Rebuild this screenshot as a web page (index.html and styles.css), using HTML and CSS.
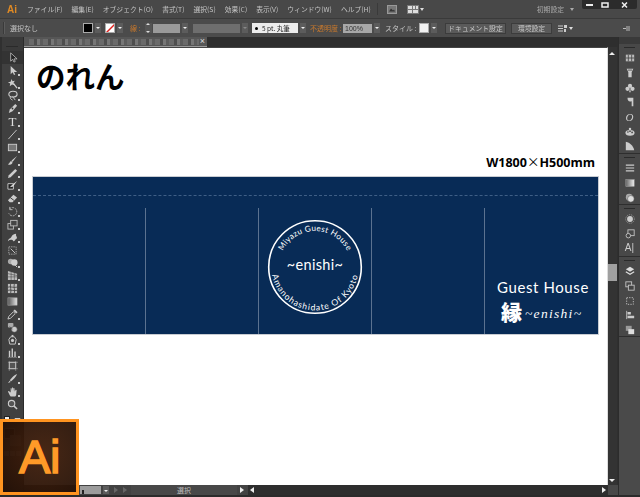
FILE: index.html
```html
<!DOCTYPE html>
<html lang="ja">
<head>
<meta charset="utf-8">
<title>Illustrator のれん</title>
<link rel="stylesheet" href="styles.css">
</head>
<body>
<div class="app">
  <header class="menubar">
    <span class="logo">Ai</span>
    <nav class="menus">
      <span>ファイル(F)</span><span>編集(E)</span><span>オブジェクト(O)</span><span>書式(T)</span><span>選択(S)</span><span>効果(C)</span><span>表示(V)</span><span>ウィンドウ(W)</span><span>ヘルプ(H)</span>
    </nav>
    <span class="menu-sep"></span>
    <svg class="mb-icon" width="10" height="9" viewBox="0 0 10 9"><rect x=".5" y=".5" width="9" height="8" fill="#777" stroke="#999"/><path d="M2 6.5l2-3 2 2 1-1 1 2z" fill="#333"/></svg>
    <svg class="mb-icon2" width="12" height="9" viewBox="0 0 12 9"><rect width="12" height="9" fill="#777"/><path d="M1 1h4v3H1zM6 1h2v3H6zM9 1h2v3H9zM1 5h4v3H1zM6 5h5v3H6z" fill="#ddd"/></svg>
    <span class="caret-s"></span>
    <span class="workspace">初期設定</span>
    <span class="caret-s ws-caret"></span>
    <div class="winbtns">
      <span class="winbtn"><svg width="7" height="5" viewBox="0 0 7 5"><rect y="2" width="7" height="2" fill="#eee"/></svg></span>
      <span class="winbtn"><svg width="8" height="6" viewBox="0 0 8 6"><rect x="1" y="1" width="6" height="4" fill="none" stroke="#eee" stroke-width="1.5"/></svg></span>
      <span class="winbtn close"><svg width="7" height="6" viewBox="0 0 7 6"><path d="M1 .5l5 5M6 .5l-5 5" stroke="#eee" stroke-width="1.5"/></svg></span>
    </div>
  </header>

  <div class="controlbar">
    <span class="grip"></span>
    <span class="c-label sel">選択なし</span>
    <span class="swatch black"></span><span class="dd"></span>
    <span class="swatch none"><svg width="9" height="9" viewBox="0 0 9 9"><path d="M0 9L9 0" stroke="#e0201c" stroke-width="1.4"/></svg></span><span class="dd"></span>
    <span class="c-label orange stroke-l">線 :</span>
    <span class="stepper"></span>
    <span class="field f-stroke"></span><span class="dd"></span>
    <span class="field f-dash"></span><span class="dd dim"></span>
    <span class="brush"><i></i>5 pt. 丸筆</span><span class="dd"></span>
    <span class="c-label orange op-l">不透明度 :</span>
    <span class="field f-op">100%</span><span class="dd"></span>
    <span class="c-label style-l">スタイル :</span>
    <span class="swatch white"></span><span class="dd"></span>
    <span class="btn b-doc">ドキュメント設定</span>
    <span class="btn b-env">環境設定</span>
    <svg class="c-icon" width="10" height="9" viewBox="0 0 10 9"><path d="M0 2h5M0 4.5h5M0 7h5" stroke="#ccc"/><path d="M6 1h3v3H6zM6 5h2v3H6z" fill="#ccc"/></svg>
    <span class="caret-s"></span>
    <svg class="c-end" width="7" height="7" viewBox="0 0 7 7"><path d="M0 3.5h3M4 1v5M6 1v5" stroke="#bbb"/></svg>
  </div>

  <div class="main">
    <aside class="toolbar">
      <div class="pane-head"><i></i></div>
      <div class="tool sel-tool"><svg viewBox="0 0 12 12"><path d="M4 1v9l2.2-2 1.4 3 1.4-.7L7.6 7.5H11z" fill="#222" stroke="#ccc" stroke-width=".8"/></svg></div>
      <div class="tool more"><svg viewBox="0 0 12 12"><path d="M4 1v9l2.2-2 1.4 3 1.4-.7L7.6 7.5H11z" fill="#ccc"/></svg></div>
      <div class="tool more"><svg viewBox="0 0 12 12"><path d="M7 6l4 5" stroke="#ccc" stroke-width="1.4"/><path d="M5 1l1 2.5L8.500 3 7 5.500 8.500 8 5.500 7 3 9l.5-3L1 4.500 4 4z" fill="#ccc"/></svg></div>
      <div class="tool more"><svg viewBox="0 0 12 12"><ellipse cx="6.500" cy="4.500" rx="4.500" ry="3.200" fill="none" stroke="#ccc" stroke-width="1.2"/><path d="M4 7c-1 2 0 3 2 4M6 7l3 4" fill="none" stroke="#ccc"/></svg></div>
      <div class="tool more grp"><svg viewBox="0 0 12 12"><path d="M9 1l2 2-5 6-4 2 1-4z" fill="#ccc"/><circle cx="6" cy="6" r="1" fill="#333"/></svg></div>
      <div class="tool more"><span class="t-glyph">T</span></div>
      <div class="tool more"><svg viewBox="0 0 12 12"><path d="M1.500 11L10.500 1" stroke="#ccc"/></svg></div>
      <div class="tool more"><svg viewBox="0 0 12 12"><rect x="1.500" y="2.500" width="9" height="7" fill="#777" stroke="#ccc"/></svg></div>
      <div class="tool more"><svg viewBox="0 0 12 12"><path d="M11 1L5 6l1 1.500zM4.500 6.500C3 7 3 9 1 10c2 1.500 5 .5 5-2z" fill="#ccc"/></svg></div>
      <div class="tool more"><svg viewBox="0 0 12 12"><path d="M9 1l2 2-7 7-3 1 1-3z" fill="#ccc"/></svg></div>
      <div class="tool more"><svg viewBox="0 0 12 12"><path d="M1 4h6v6H1z" fill="#222" stroke="#ccc"/><path d="M11 1L6 5l1 1.500zM3 8l3-3 1 2z" fill="#ddd"/></svg></div>
      <div class="tool more"><svg viewBox="0 0 12 12"><path d="M7 2l4 3-5 5H3L1 8z" fill="#ccc"/><path d="M3.500 5l4 3" stroke="#333"/></svg></div>
      <div class="tool more grp"><svg viewBox="0 0 12 12"><path d="M3 3a4.500 4.500 0 1 1-1 5" fill="none" stroke="#bbb" stroke-dasharray="2 1"/><path d="M3 1v3h3" fill="none" stroke="#bbb"/></svg></div>
      <div class="tool more"><svg viewBox="0 0 12 12"><rect x="1" y="5" width="6" height="6" fill="none" stroke="#bbb"/><rect x="4" y="1.500" width="7" height="6" fill="#444" stroke="#bbb"/></svg></div>
      <div class="tool more"><svg viewBox="0 0 12 12"><path d="M1 10c1-4 3-2 4-5 1-2 3-3 5-3-1 2 1 3 1 5-2 0-2 3-4 3-1-2-4-2-6 0z" fill="#ccc"/></svg></div>
      <div class="tool"><svg viewBox="0 0 12 12"><path d="M2 2h8v8H2z" fill="none" stroke="#aaa" stroke-dasharray="1.500 1"/><path d="M4 4l5 5" stroke="#ccc"/></svg></div>
      <div class="tool more"><svg viewBox="0 0 12 12"><circle cx="4" cy="5" r="3" fill="#aaa"/><circle cx="8" cy="6" r="3.500" fill="#ccc"/><path d="M9 9l2 2" stroke="#ddd"/></svg></div>
      <div class="tool more"><svg viewBox="0 0 12 12"><path d="M1 1l10 3v7H1z" fill="#bbb"/><path d="M1 4l10 2M1 7.500h10M4.500 2v9M8 3v8" stroke="#444" stroke-width=".6"/></svg></div>
      <div class="tool"><svg viewBox="0 0 12 12"><rect x="1" y="1" width="10" height="10" fill="#bbb"/><path d="M1 4.500c3-1 6 1 10 0M1 8c3-1 6 1 10 0M4 1c-1 3 1 7 0 10M8 1c-1 3 1 7 0 10" stroke="#333" fill="none" stroke-width=".8"/></svg></div>
      <div class="tool"><svg viewBox="0 0 12 12"><defs><linearGradient id="g1"><stop offset="0" stop-color="#555"/><stop offset="1" stop-color="#e4e4e4"/></linearGradient></defs><rect x="1" y="2" width="10" height="8" fill="url(#g1)" stroke="#aaa" stroke-width=".6"/></svg></div>
      <div class="tool more"><svg viewBox="0 0 12 12"><path d="M1 11l1-3 5-5 2 2-5 5z" fill="none" stroke="#ccc"/><path d="M7 2l1.500-1.500 3 3L10 5z" fill="#ccc"/></svg></div>
      <div class="tool"><svg viewBox="0 0 12 12"><rect x="1" y="1" width="6" height="5" rx="1" fill="#aaa"/><circle cx="8" cy="8" r="3.200" fill="#ccc" stroke="#444" stroke-width=".6"/><path d="M3 5l3 3" stroke="#555"/></svg></div>
      <div class="tool more grp"><svg viewBox="0 0 12 12"><path d="M4 3h4l2 3-1 5H3L2 6z" fill="none" stroke="#ccc"/><path d="M5 1h2v2H5z" fill="#ccc"/><circle cx="6" cy="7" r="1.700" fill="#ccc"/></svg></div>
      <div class="tool more"><svg viewBox="0 0 12 12"><path d="M2 4h1.500v7H2zM5 1.500h1.500V11H5zM8 5h1.500v6H8z" fill="#ccc"/><path d="M1 11.300h10" stroke="#aaa" stroke-width=".6"/></svg></div>
      <div class="tool grp"><svg viewBox="0 0 12 12"><rect x="2.500" y="2.500" width="7" height="7" fill="#555" stroke="#ccc"/><path d="M1 2.500h11M1 9.500h11M2.500 1v11M9.500 1v11" stroke="#bbb" stroke-width=".5"/></svg></div>
      <div class="tool more"><svg viewBox="0 0 12 12"><path d="M11 1C8 2 5 5 3 8l1.500 1C7 7 10 4 11 1zM3 8.500L1 11l3-1.200z" fill="#ccc"/></svg></div>
      <div class="tool more grp"><svg viewBox="0 0 12 12"><path d="M3 10L1 6l1-.5L4 7V2.500l1 0 .5 3V1.500h1l.5 4V2.300h1l.5 3.700 1-2 1 .3L10 10l-1 1.500H4z" fill="#ccc"/></svg></div>
      <div class="tool"><svg viewBox="0 0 12 12"><circle cx="5" cy="5" r="3.500" fill="#555" stroke="#ccc" stroke-width="1.200"/><path d="M7.500 7.500L11 11" stroke="#ccc" stroke-width="1.600"/></svg></div>
      <div class="colors">
        <div class="defaults"><span></span><svg width="7" height="7" viewBox="0 0 7 7"><path d="M1 2.500h5M1 5V2.500M6 2.500v3" stroke="#ccc" fill="none"/></svg></div>
        <div class="fillstroke"><i class="fs-fill"></i><i class="fs-stroke"></i></div>
        <div class="modes"><i></i><i></i><i></i></div>
      </div>
    </aside>

    <section class="workspace-area">
      <div class="tabbar">
        <div class="tab"><span class="tab-blur"></span><span class="tab-x">×</span></div>
      </div>
      <div class="doc-row">
        <div class="canvas">
          <h1 class="title">のれん</h1>
          <p class="dim-note">W1800<span class="times">×</span>H500mm</p>
          <div class="noren">
            <div class="hem"></div>
            <div class="panels">
              <div class="panel"></div>
              <div class="panel"></div>
              <div class="panel seal-panel">
                <svg class="seal" width="96" height="96" viewBox="0 0 96 96">
                  <defs>
                    <path id="arcTop" d="M12 48a36 36 0 0 1 72 0"/>
                    <path id="arcBottom" d="M4.500 48a43.500 43.500 0 0 0 87 0"/>
                  </defs>
                  <circle cx="48" cy="48" r="46.300" fill="none" stroke="#fff" stroke-width="1.600"/>
                  <text class="seal-text"><textPath href="#arcTop" startOffset="50%" text-anchor="middle">Miyazu Guest House</textPath></text>
                  <text class="seal-text wide"><textPath href="#arcBottom" startOffset="50%" text-anchor="middle">Amanohashidate Of Kyoto</textPath></text>
                  <text class="seal-name" x="48" y="51" text-anchor="middle">~enishi~</text>
                </svg>
              </div>
              <div class="panel"></div>
              <div class="panel sign-panel">
                <div class="sign-en">Guest House</div>
                <div class="sign-jp"><span class="kanji">縁</span><span class="romaji">~enishi~</span></div>
              </div>
            </div>
          </div>
        </div>
        <div class="vscroll">
          <span class="arrow-up"></span>
          <span class="thumb"></span>
          <span class="arrow-down"></span>
        </div>
      </div>
      <div class="statusbar">
        <span class="zoomfield"><i></i></span><span class="dd"></span>
        <span class="nav"></span><span class="nav bar"></span>
        <span class="status-text">選択</span>
        <span class="arrow-r"></span>
        <div class="hscroll"><span class="arrow-l"></span><span class="arrow-r end"></span></div>
        <span class="corner"></span>
      </div>
    </section>

    <aside class="panels-dock">
      <div class="dock-top"></div>
      <div class="dock-group g1">
        <i class="bar"></i>
        <svg viewBox="0 0 12 12"><rect x="1" y="2" width="10" height="8" fill="#bbb"/><path d="M4 2v8M8 2v8M1 6h10" stroke="#444"/></svg>
        <svg viewBox="0 0 12 12"><path d="M2 1h8l-2 4v6H4V5z" fill="#ccc"/><path d="M3.500 2.500h5" stroke="#444"/></svg>
        <svg viewBox="0 0 12 12"><circle cx="6" cy="3.500" r="2.500" fill="#ccc"/><circle cx="3" cy="7" r="2.500" fill="#ccc"/><circle cx="9" cy="7" r="2.500" fill="#ccc"/><path d="M5 11l1-5 1 5z" fill="#ccc"/></svg>
        <svg viewBox="0 0 12 12"><path d="M3 1h7v10H8V5C5 6 3 5 3 1z" fill="#ccc"/></svg>
        <span class="dock-o">O</span>
        <svg viewBox="0 0 12 12"><ellipse cx="6" cy="7" rx="5.500" ry="3.500" fill="#ccc"/><circle cx="3.500" cy="6" r="1" fill="#444"/><circle cx="6" cy="5" r="1" fill="#444"/><circle cx="8.500" cy="6.500" r="1" fill="#444"/><circle cx="6" cy="2.500" r="1.500" fill="#ccc"/></svg>
        <svg viewBox="0 0 12 12"><path d="M1 1c5 1 9 5 10 10H1z" fill="#ccc"/></svg>
      </div>
      <div class="dock-group g2">
        <i class="bar"></i>
        <svg viewBox="0 0 12 12"><path d="M1 2.500h10M1 6h10M1 9.500h10" stroke="#ccc" stroke-width="1.400"/></svg>
        <svg viewBox="0 0 12 12"><defs><linearGradient id="g2"><stop offset="0" stop-color="#666"/><stop offset="1" stop-color="#eee"/></linearGradient></defs><rect x="1" y="2" width="10" height="8" fill="url(#g2)" stroke="#aaa" stroke-width=".6"/></svg>
        <svg viewBox="0 0 12 12"><circle cx="5" cy="5" r="4" fill="#aaa"/><circle cx="7" cy="7" r="4" fill="#ddd" stroke="#444" stroke-width=".6"/></svg>
      </div>
      <div class="dock-group g3">
        <i class="bar"></i>
        <svg viewBox="0 0 12 12"><circle cx="6" cy="6" r="3.500" fill="#ccc"/><circle cx="6" cy="6" r="5.200" fill="none" stroke="#999" stroke-dasharray="1.500 1"/></svg>
        <svg viewBox="0 0 12 12"><rect x="3.500" y="1" width="7.500" height="7" fill="none" stroke="#ccc"/><circle cx="4" cy="8" r="2.700" fill="#444" stroke="#ccc"/></svg>
        <span class="dock-a">A|</span>
      </div>
      <div class="dock-group g4">
        <i class="bar"></i>
        <svg viewBox="0 0 12 12"><path d="M6 1l5 3-5 3-5-3z" fill="#ddd"/><path d="M1 7l5 3 5-3" fill="none" stroke="#ddd" stroke-width="1.400"/></svg>
        <svg viewBox="0 0 12 12"><rect x="1" y="1" width="7" height="6" fill="none" stroke="#ccc"/><rect x="4" y="5" width="7" height="6" fill="#444" stroke="#ccc"/></svg>
        <svg viewBox="0 0 12 12"><rect x="2" y="2" width="8" height="8" fill="none" stroke="#ccc" stroke-dasharray="1.500 1.500"/></svg>
        <svg viewBox="0 0 12 12"><path d="M2 1v10" stroke="#ccc"/><path d="M3 2.500h4v3H3zM3 7h8v3H3z" fill="#ccc"/></svg>
        <svg viewBox="0 0 12 12"><rect x="1" y="1" width="7" height="6" fill="#999"/><rect x="4" y="5" width="7" height="6" fill="#ddd"/></svg>
      </div>
      <div class="dock-rest"></div>
    </aside>
  </div>
  <div class="app-foot"></div>

  <div class="ai-badge"><span>Ai</span></div>
</div>
</body>
</html>
```

FILE: styles.css
```css
* { box-sizing: border-box; }
html, body { margin: 0; padding: 0; overflow: hidden; }
body {
  width: 640px; height: 497px;
  background: #2f2f2f;
  font-family: "Noto Sans CJK JP", "Liberation Sans", sans-serif;
  color: #c8c8c8;
}
.app { position: relative; width: 640px; height: 497px; display: flex; flex-direction: column; overflow: hidden; }

/* menu bar */
.menubar {
  height: 18px; flex: none; display: flex; align-items: center;
  background: #484848; font-size: 6.800px; line-height: 1; position: relative;
  filter: blur(.3px);
}
.logo { width: 27px; padding-left: 7px; color: #e08a24; font: bold 10px "Liberation Sans", sans-serif; }
.menus { display: flex; gap: 9px; white-space: nowrap; }
.menus span { color: #c4c4c4; }
.menu-sep { width: 1px; height: 12px; background: #3a3a3a; margin-left: 6px; }
.mb-icon { margin-left: 9px; }
.mb-icon2 { margin-left: 10px; }
.caret-s { width: 0; height: 0; border: 2px solid transparent; border-top: 3px solid #ddd; border-bottom: 0; margin-left: 1px; }
.workspace { margin-left: auto; color: #aaa; margin-right: 5px; }
.ws-caret { border-top-color: #aaa; margin-right: 8px; }
.winbtns { display: flex; height: 9px; align-self: flex-start; background: #2b2b2b; margin-right: 3px; border-radius: 0 0 2px 2px; }
.winbtn { width: 15px; display: flex; align-items: center; justify-content: center; }
.winbtn.close { width: 25px; }

/* control bar */
.controlbar {
  height: 19px; flex: none; display: flex; align-items: center;
  background: #4b4b4b; border-top: 1px solid #3a3a3a; font-size: 7px; line-height: 1; white-space: nowrap;
  filter: blur(.3px);
}
.grip { width: 2px; height: 12px; margin-left: 3px; background: #3a3a3a; border-right: 1px solid #5c5c5c; }
.c-label { color: #c2c2c2; }
.sel { margin-left: 5px; width: 73px; }
.orange { color: #c9792c; }
.swatch { width: 10px; height: 10px; border: 1px solid #aaa; display: block; flex: none; }
.swatch.black { background: #000; }
.swatch.none { background: #fff; margin-left: 4px; padding: 0; overflow: hidden; }
.swatch.none svg { display: block; }
.swatch.white { background: #f2f2f2; }
.dd { width: 6px; height: 10px; margin-left: 2px; background: #5c5c5c; flex: none; position: relative; }
.dd::after { content: ""; position: absolute; left: 1px; top: 4px; border: 2px solid transparent; border-top: 2px solid #eee; border-bottom: 0; }
.dd.dim::after { border-top-color: #888; }
.stroke-l { margin-left: 7px; width: 15px; }
.stepper { width: 7px; height: 10px; background: #555; position: relative; }
.stepper::before, .stepper::after { content: ""; position: absolute; left: 1px; border: 2px solid transparent; }
.stepper::before { top: 0; border-bottom: 2px solid #ddd; border-top: 0; }
.stepper::after { bottom: 0; border-top: 2px solid #ddd; border-bottom: 0; }
.field { height: 9px; display: block; flex: none; color: #333; font: 7px/9px "Liberation Sans", sans-serif; padding-left: 2px; }
.f-stroke { width: 27px; margin-left: 1px; background: #9a9a9a; }
.f-dash { width: 47px; margin-left: 5px; background: #6e6e6e; }
.brush { width: 46px; height: 10px; margin-left: 4px; background: #ececec; color: #222; font-size: 6.500px; line-height: 10px; display: flex; align-items: center; gap: 4px; padding-left: 3px; }
.brush i { width: 3px; height: 3px; border-radius: 50%; background: #000; flex: none; }
.op-l { margin-left: 4px; width: 33px; }
.f-op { width: 29px; background: #a8a8a8; }
.style-l { margin-left: 5px; width: 34px; }
.btn { height: 11px; background: #5a5a5a; border: 1px solid #3c3c3c; color: #c8c8c8; font-size: 6.800px; line-height: 9px; text-align: center; display: block; }
.b-doc { width: 61px; margin-left: 8px; }
.b-env { width: 41px; margin-left: 5px; }
.c-icon { margin-left: 6px; }
.c-end { margin-left: 50px; }

/* main */
.main { flex: 1; min-height: 0; display: flex; }

.toolbar { width: 24px; flex: none; background: #404040; border-left: 2px solid #303030; border-right: 1px solid #2a2a2a; display: flex; flex-direction: column; align-items: center; filter: blur(.3px); }
.pane-head { height: 14px; width: 100%; flex: none; position: relative; background: #3a3a3a; }
.pane-head i { position: absolute; left: 4px; top: 9px; width: 12px; height: 1px; background: #2a2a2a; }
.tool { height: 12.850px; width: 100%; flex: none; display: flex; align-items: center; justify-content: center; position: relative; }
.tool svg { width: 11px; height: 11px; }
.tool.more::after { content: ""; position: absolute; right: 3px; bottom: 1px; width: 2px; height: 2px; background: #ccc; }
.sel-tool { background: #333; }
.t-glyph { font: 13px/13px "Liberation Serif", serif; color: #ddd; }
.colors { margin-top: 5px; width: 100%; display: flex; flex-direction: column; align-items: center; gap: 5px; }
.defaults { display: flex; gap: 4px; align-items: center; }
.defaults span { width: 6px; height: 6px; background: #eee; border: 1px solid #222; }
.fillstroke { width: 17px; height: 18px; position: relative; }
.fs-fill { position: absolute; left: 0; top: 0; width: 11px; height: 11px; background: #000; border: 1px solid #777; }
.fs-stroke { position: absolute; right: 0; bottom: 0; width: 11px; height: 11px; background: #777; }
.modes { display: flex; gap: 1px; }
.modes i { width: 5px; height: 5px; background: #888; }

/* workspace */
.workspace-area { flex: 1; min-width: 0; display: flex; flex-direction: column; }
.tabbar { height: 10px; flex: none; background: #2e2e2e; }
.tab { width: 183px; height: 10px; background: #565656; border-bottom: 1px solid #9a9a9a; display: flex; align-items: center; padding: 0 2px 0 5px; }
.tab-blur { width: 170px; height: 6px; background: repeating-linear-gradient(90deg, #6a6a6a 0 5px, #4e4e4e 5px 8px, #767676 8px 11px, #5c5c5c 11px 14px); filter: blur(.6px); }
.tab-x { margin-left: auto; font: 9px/9px "Liberation Sans", sans-serif; color: #ddd; }
.doc-row { flex: 1; min-height: 0; display: flex; }

.canvas { width: 584px; flex: none; background: #fff; padding: 11px 10px 0 9px; border-top: 1px solid #444; border-right: 1px solid #ddd; overflow: hidden; }
.title { margin: 0 0 0 3px; height: 38px; font: 700 29.500px/32px "Noto Sans CJK JP", sans-serif; color: #000; letter-spacing: 0; }
.dim-note { margin: 58px 2px 0 0; height: 22px; font: bold 12.500px/14px "Open Sans", "Liberation Sans", sans-serif; color: #000; text-align: right; }
.times { font-family: "Noto Sans CJK JP", sans-serif; font-weight: 400; }
.noren { width: 565px; height: 157px; background: #082b56; outline: 1px solid #c8ccd2; display: flex; flex-direction: column; }
.hem { height: 19px; flex: none; border-bottom: 1px dashed #3f5f86; }
.panels { flex: 1; margin-top: 12px; display: grid; grid-template-columns: repeat(5, 113px); }
.panel { border-right: 1px solid #5b7290; min-width: 0; }
.panel:last-child { border-right: 0; }
.seal-panel { display: flex; justify-content: center; padding-top: 11px; }
.seal { display: block; flex: none; }
.seal-text { font: 8.200px "Lato", sans-serif; fill: #fff; letter-spacing: .3px; }
.seal-text.wide { font-size: 8.600px; letter-spacing: .9px; }
.seal-name { font: 400 14.500px "Lato", sans-serif; fill: #fff; letter-spacing: .3px; }
.sign-panel { padding: 71px 0 0 12px; color: #fff; }
.sign-en { font: 400 15px/17px "Lato", sans-serif; letter-spacing: .6px; white-space: nowrap; }
.sign-jp { display: flex; align-items: flex-end; margin: 3px 0 0 4px; }
.kanji { font: 900 21px/25px "Noto Sans CJK JP", sans-serif; }
.romaji { font: italic 13.500px/20px "Liberation Serif", serif; margin-left: 3px; letter-spacing: 1.300px; }

.vscroll { width: 9px; flex: none; background: #333; position: relative; }
.thumb { position: absolute; left: 0; top: 217px; width: 9px; height: 17px; background: #a0a0a0; }
.arrow-up { position: absolute; left: 1px; top: 5px; border: 3px solid transparent; border-bottom: 3px solid #eee; border-top: 0; }
.arrow-down { position: absolute; left: 1px; bottom: 3px; border: 3px solid transparent; border-top: 3px solid #eee; border-bottom: 0; }

.statusbar { height: 10px; flex: none; background: #424242; display: flex; align-items: center; position: relative; }
.statusbar .dd { height: 8px; }
.zoomfield { width: 21px; height: 8px; margin-left: 56px; background: #9c9c9c; display: block; position: relative; }
.zoomfield i { position: absolute; left: 2px; bottom: 0; width: 2px; height: 4px; background: #222; }
.nav { width: 0; height: 0; margin-left: 5px; border: 3px solid transparent; border-left: 4px solid #666; border-right: 0; }
.nav.bar { border-left-color: #666; }
.status-text { width: 106px; text-align: center; font-size: 7px; line-height: 10px; color: #bbb; margin-left: 4px; background: #484848; }
.arrow-r { width: 0; height: 0; border: 3px solid transparent; border-left: 4px solid #eee; border-right: 0; margin-left: 3px; }
.hscroll { flex: 1; height: 10px; margin-left: 4px; background: #2e2e2e; display: flex; align-items: center; padding: 0 2px 0 2px; }
.arrow-l { width: 0; height: 0; border: 3px solid transparent; border-right: 4px solid #eee; border-left: 0; }
.arrow-r.end { margin-left: auto; }
.corner { width: 10px; height: 10px; background: #484848; }

/* panel dock */
.panels-dock { width: 22px; flex: none; background: #404040; display: flex; flex-direction: column; align-items: center; border-left: 1px solid #2c2c2c; filter: blur(.3px); }
.dock-top { height: 7px; width: 100%; background: #3a3a3a; flex: none; }
.dock-group { width: 100%; display: flex; flex-direction: column; align-items: center; border-bottom: 1px solid #2e2e2e; background: #484848; padding-top: 3px; flex: none; }
.dock-group .bar { width: 11px; height: 1px; background: #2a2a2a; margin-bottom: 3px; flex: none; }
.dock-group svg { width: 10px; height: 10px; margin: 2.350px 0; flex: none; }
.dock-o, .dock-a { height: 14.700px; flex: none; color: #ccc; line-height: 14.700px; }
.dock-o { font: italic 11px/14.700px "Liberation Serif", serif; }
.dock-a { font: 10px/14.700px "Liberation Sans", sans-serif; }
.g1 { height: 110px; }
.g2 { height: 51px; }
.g3 { height: 52px; }
.g4 { height: 80px; }
.dock-rest { flex: 1; width: 100%; background: #4a4a4a; }

.app-foot { height: 2px; flex: none; background: #2b2b2b; }

/* orange badge over the window */
.ai-badge {
  position: absolute; left: 0; top: 419px; width: 79px; height: 76px;
  border: 3px solid #ff9420;
  background: radial-gradient(circle at 55% 45%, rgba(66,32,13,.97), rgba(34,15,5,.95));
  display: flex; align-items: center; justify-content: center;
}
.ai-badge span { font: 400 47px/47px "Liberation Sans", sans-serif; color: #ff9a28; letter-spacing: -.5px; -webkit-text-stroke: 1.500px #ff9a28; margin-bottom: 1px; }
```
